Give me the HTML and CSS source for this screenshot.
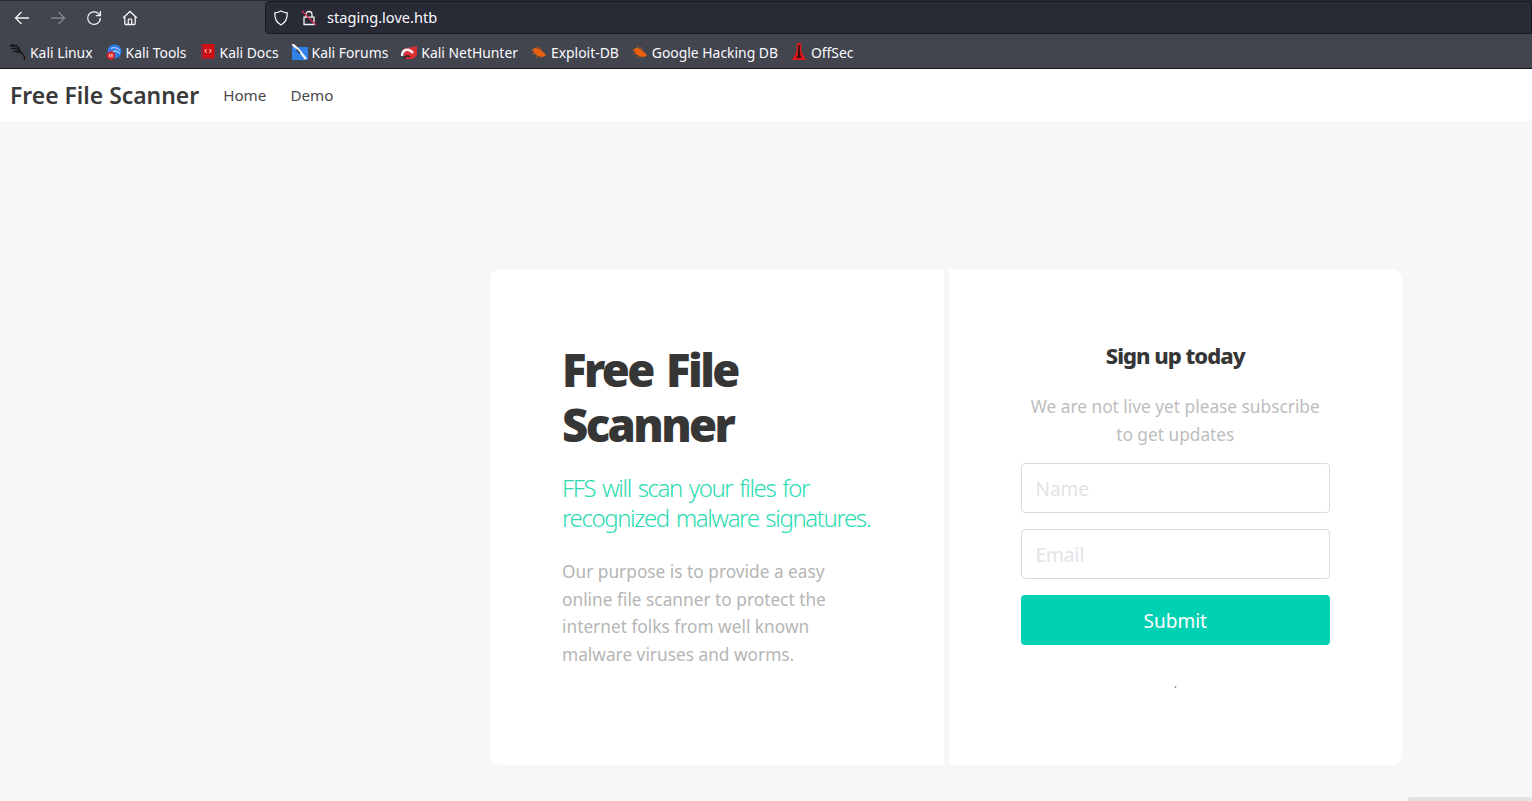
FILE: index.html
```html
<!DOCTYPE html>
<html lang="en">
  <head>
    <meta charset="UTF-8" />
    <title>Free File Scanner</title>
    <link rel="stylesheet" href="styles.css">
  </head>
  <body>
    <!-- Browser toolbar -->
    <div class="toolbar">
      <div class="nav-buttons">
        <svg class="tool-icon" viewBox="0 0 16 16"><path d="M15 8H1.500M7.500 2L1.500 8l6 6"/></svg>
        <svg class="tool-icon dim" viewBox="0 0 16 16"><path d="M1 8h13.500M8.500 2l6 6-6 6"/></svg>
        <svg class="tool-icon" viewBox="0 0 16 16"><path d="M13.600 5.200A6.300 6.300 0 1 0 14.300 8M14.400 1v4.600H9.800"/></svg>
        <svg class="tool-icon" viewBox="0 0 16 16"><path d="M1 8l7-6.500L15 8M2.800 6.500v7c0 .6.4 1 1 1h8.400c.6 0 1-.4 1-1v-7M6.300 14.500V10c0-.5.3-.8.8-.8h1.800c.5 0 .8.3.8.8v4.500"/></svg>
      </div>
      <div class="urlbar">
        <svg class="url-icon" viewBox="0 0 16 16"><path d="M8 1c2 1.200 4 1.700 6.200 1.800C14.400 9 12 13 8 15 4 13 1.600 9 1.800 2.800 4 2.700 6 2.200 8 1z"/></svg>
        <svg class="url-icon lock" viewBox="0 0 16 16">
          <path d="M5 7V4.500a3 3 0 0 1 6 0V7M3 7.200h10v7.300H3z"/>
          <path class="lock-slash" d="M1 1l14 14"/>
        </svg>
        <span class="url-text">staging.love.htb</span>
      </div>
    </div>

    <!-- Bookmarks -->
    <div class="bookmarks">
      <a class="bookmark" href="#">
        <svg class="fav" viewBox="0 0 16 16"><path class="kali" d="M0 2.500c3-1.500 6-1 8 .5 2 1.500 1 3.500 3 5.500 1.500 1.500 3 2.500 3.500 4.500 .2 1 0 2-.5 2.500M1 .5l4.500 1.500M1.500 5C4 3.500 6 4 7.500 5.500c1 1 2 2.500 4 3.500M3 7.500C5 6.500 7 7.500 8.500 9"/></svg>
        <span>Kali Linux</span>
      </a>
      <a class="bookmark" href="#">
        <svg class="fav" viewBox="0 0 16 16"><circle cx="8.500" cy="7.500" r="7" fill="#2f7fe8"/><path d="M5 4.500c3-1.500 6-1 9 2M7 7.500c2-1 4-.5 7 2" stroke="#dfeaff" fill="none"/><circle cx="5" cy="11.500" r="4.200" fill="#d92027"/><path d="M3.800 9.800v3.500M6 9.800v3.500" stroke="#fff" fill="none"/></svg>
        <span>Kali Tools</span>
      </a>
      <a class="bookmark" href="#">
        <svg class="fav" viewBox="0 0 16 16"><path d="M1.500 0h13v14.500h-13z" fill="#d01217"/><path d="M1.500 14.500h13V16h-13z" fill="#5a3a52"/><path d="M1.500 0h1.500v16H1.500z" fill="#8a2a3a"/><path d="M6.500 5L5 6.800l1.500 1.800M9.500 5L11 6.800 9.500 8.600" stroke="#fff" fill="none"/></svg>
        <span>Kali Docs</span>
      </a>
      <a class="bookmark" href="#">
        <svg class="fav" viewBox="0 0 16 16"><path d="M0 3h16v13H0z" fill="#2f82ec"/><path d="M0 0l6 5 8 10" stroke="#f4f4f4" stroke-width="2.400" fill="none"/><path d="M4.500 5.500l3.500 4" stroke="#333" stroke-width="1.300" fill="none"/></svg>
        <span>Kali Forums</span>
      </a>
      <a class="bookmark" href="#">
        <svg class="fav" viewBox="0 0 16 16"><path d="M2 5L16 2v9l-4 4H4z" fill="#dc2f36"/><path d="M1 12c0-6 6-9 11-3" stroke="#f2f2f2" stroke-width="2.400" fill="none"/><path d="M3 15c1-3 4-4 6-2" stroke="#2c2c2c" stroke-width="1.600" fill="none"/></svg>
        <span>Kali NetHunter</span>
      </a>
      <a class="bookmark" href="#">
        <svg class="fav" viewBox="0 0 16 16"><use href="#bug"/></svg>
        <span>Exploit-DB</span>
      </a>
      <a class="bookmark" href="#">
        <svg class="fav" viewBox="0 0 16 16"><use href="#bug"/></svg>
        <span>Google Hacking DB</span>
      </a>
      <a class="bookmark" href="#">
        <svg class="fav tall" viewBox="0 0 16 18"><path d="M6 0h4l.6 9L15 17H1l4.400-8z" fill="#d8181c"/><path d="M7.300 2h1.400l.5 10 1.300 3H5.500l1.300-3z" fill="#3a1010"/></svg>
        <span>OffSec</span>
      </a>
    </div>

    <svg class="defs" width="0" height="0">
      <symbol id="bug" viewBox="0 0 16 16">
        <path d="M2 5c2-2 6-1 9 2l4 4c-1 2-5 2.500-8 1S2 8 2 5z" fill="#e8610f"/>
        <path d="M0 6l3 1M1 10l3-.5M5 2l2 2.500M9 3l1 2.500M5 14l2-2M10 14l0-2" stroke="#b9581c" fill="none"/>
      </symbol>
    </svg>

    <!-- Site navbar -->
    <nav class="navbar">
      <a class="brand" href="#">Free File Scanner</a>
      <a class="nav-link" href="#">Home</a>
      <a class="nav-link" href="#">Demo</a>
    </nav>

    <!-- Main -->
    <main class="content">
      <div class="panels">
        <section class="panel panel-left">
          <h1>Free File Scanner</h1>
          <h2>FFS will scan your files for recognized malware signatures.</h2>
          <p>Our purpose is to provide a easy online file scanner to protect the internet folks from well known malware viruses and worms.</p>
        </section>
        <section class="panel panel-right">
          <h3>Sign up today</h3>
          <p class="signup-text">We are not live yet please subscribe to get updates</p>
          <form class="signup-form">
            <input type="text" placeholder="Name" />
            <input type="email" placeholder="Email" />
            <button type="submit">Submit</button>
          </form>
          <p class="fine-print">.</p>
        </section>
      </div>
    </main>

    <div class="scroll-thumb"></div>
  </body>
</html>
```

FILE: styles.css
```css
/* ======= Global ======= */
* {
  box-sizing: border-box;
  margin: 0;
  padding: 0;
}

html,
body {
  height: 801px;
  overflow: hidden;
}

body {
  font-family: "Noto Sans", sans-serif;
  background-color: #f7f7f7;
  display: flex;
  flex-direction: column;
}

a {
  text-decoration: none;
}

/* ======= Browser toolbar ======= */
.toolbar {
  height: 36px;
  background-color: #42444e;
  border-top: 1px solid #2b2a33;
  display: flex;
  align-items: center;
  padding: 0 0 2px 14px;
}

.nav-buttons {
  display: flex;
  gap: 20px;
  width: 251px;
}

.tool-icon {
  width: 16px;
  height: 16px;
  fill: none;
  stroke: #f4f4f6;
  stroke-width: 1.300;
}

.tool-icon.dim {
  stroke: #85868d;
}

.urlbar {
  flex: 1;
  height: 33px;
  background-color: #282a36;
  border: 1px solid #191a21;
  border-radius: 4px 0 0 4px;
  display: flex;
  align-items: center;
  padding-left: 7px;
  color: #fbfbfe;
  font-size: 14.600px;
}

.url-text {
  padding-bottom: 2px;
}

.url-icon {
  width: 16px;
  height: 16px;
  fill: none;
  stroke: #f4f4f6;
  stroke-width: 1.300;
  margin-right: 12px;
}

.url-icon.lock {
  margin-right: 10px;
}

.lock-slash {
  stroke: #e22850;
}

/* ======= Bookmarks ======= */
.bookmarks {
  height: 33px;
  background-color: #42444e;
  border-bottom: 1px solid #15141a;
  display: flex;
  align-items: center;
  padding-left: 10px;
  gap: 13px;
}

.bookmark {
  display: flex;
  align-items: center;
  gap: 4px;
  color: #fbfbfe;
  font-size: 13.900px;
}

.fav {
  width: 16px;
  height: 16px;
}

.fav.tall {
  height: 18px;
}

.kali {
  fill: none;
  stroke: #111;
  stroke-width: 1.300;
}

.defs {
  position: absolute;
}

/* ======= Site navbar ======= */
.navbar {
  height: 52px;
  background-color: #fff;
  display: flex;
  align-items: center;
  padding-left: 10px;
}

.brand {
  font-size: 22.900px;
  font-weight: 600;
  color: #3a3a3a;
  margin-right: 24px;
}

.nav-link {
  font-size: 15.200px;
  color: #4a4a4a;
  margin-right: 24px;
  padding-bottom: 1px;
}

/* ======= Main ======= */
.content {
  flex: 1;
  padding: 148px 130px 0 490px;
}

.panels {
  display: flex;
  gap: 5px;
  height: 496px;
}

.panel {
  flex: 1;
  min-width: 0;
  background-color: #fff;
}

.panel-left {
  border-radius: 10px 0 0 10px;
  padding: 73px 72px 0 72px;
}

.panel-left h1 {
  font-family: "Noto Sans", sans-serif;
  font-size: 45.500px;
  line-height: 55px;
  font-weight: 900;
  letter-spacing: -2.600px;
  word-spacing: 4px;
  color: #363636;
  margin-bottom: 21px;
}

.panel-left h2 {
  font-family: "Noto Sans", sans-serif;
  font-size: 24px;
  line-height: 30px;
  font-weight: 300;
  letter-spacing: -1.400px;
  word-spacing: 2px;
  color: #2bdcb1;
  margin-bottom: 25px;
  margin-right: -10px;
}

.panel-left p {
  font-size: 17.300px;
  line-height: 27.700px;
  color: #b5b5b5;
}

.panel-right {
  border-radius: 0 10px 10px 0;
  padding: 71px 72px 0 72px;
  text-align: center;
}

.panel-right h3 {
  font-family: "Noto Sans", sans-serif;
  font-size: 22px;
  line-height: 30px;
  font-weight: 800;
  letter-spacing: -1px;
  color: #363636;
  margin-bottom: 23px;
}

.signup-text {
  font-size: 17.300px;
  line-height: 28px;
  color: #bdbdbd;
  margin-bottom: 14px;
}

.signup-form {
  display: flex;
  flex-direction: column;
  gap: 16px;
}

.signup-form input {
  height: 50px;
  padding: 2px 14px 0;
  font-family: "Noto Sans", sans-serif;
  font-size: 19px;
  border: 1px solid #dbdbdb;
  border-radius: 4px;
  background-color: #fff;
}

.signup-form input::placeholder {
  color: #e3e3e6;
}

.signup-form button {
  height: 50px;
  padding-top: 2px;
  border: none;
  border-radius: 4px;
  background-color: #00d1b2;
  color: #fff;
  font-family: "Noto Sans", sans-serif;
  font-size: 19px;
}

.fine-print {
  margin-top: 31px;
  font-size: 12px;
  line-height: 16px;
  color: #777;
}

.scroll-thumb {
  position: fixed;
  left: 1408px;
  right: 0;
  bottom: 0;
  height: 4px;
  background-color: #e3e3e3;
  border-radius: 3px 0 0 0;
}
```
